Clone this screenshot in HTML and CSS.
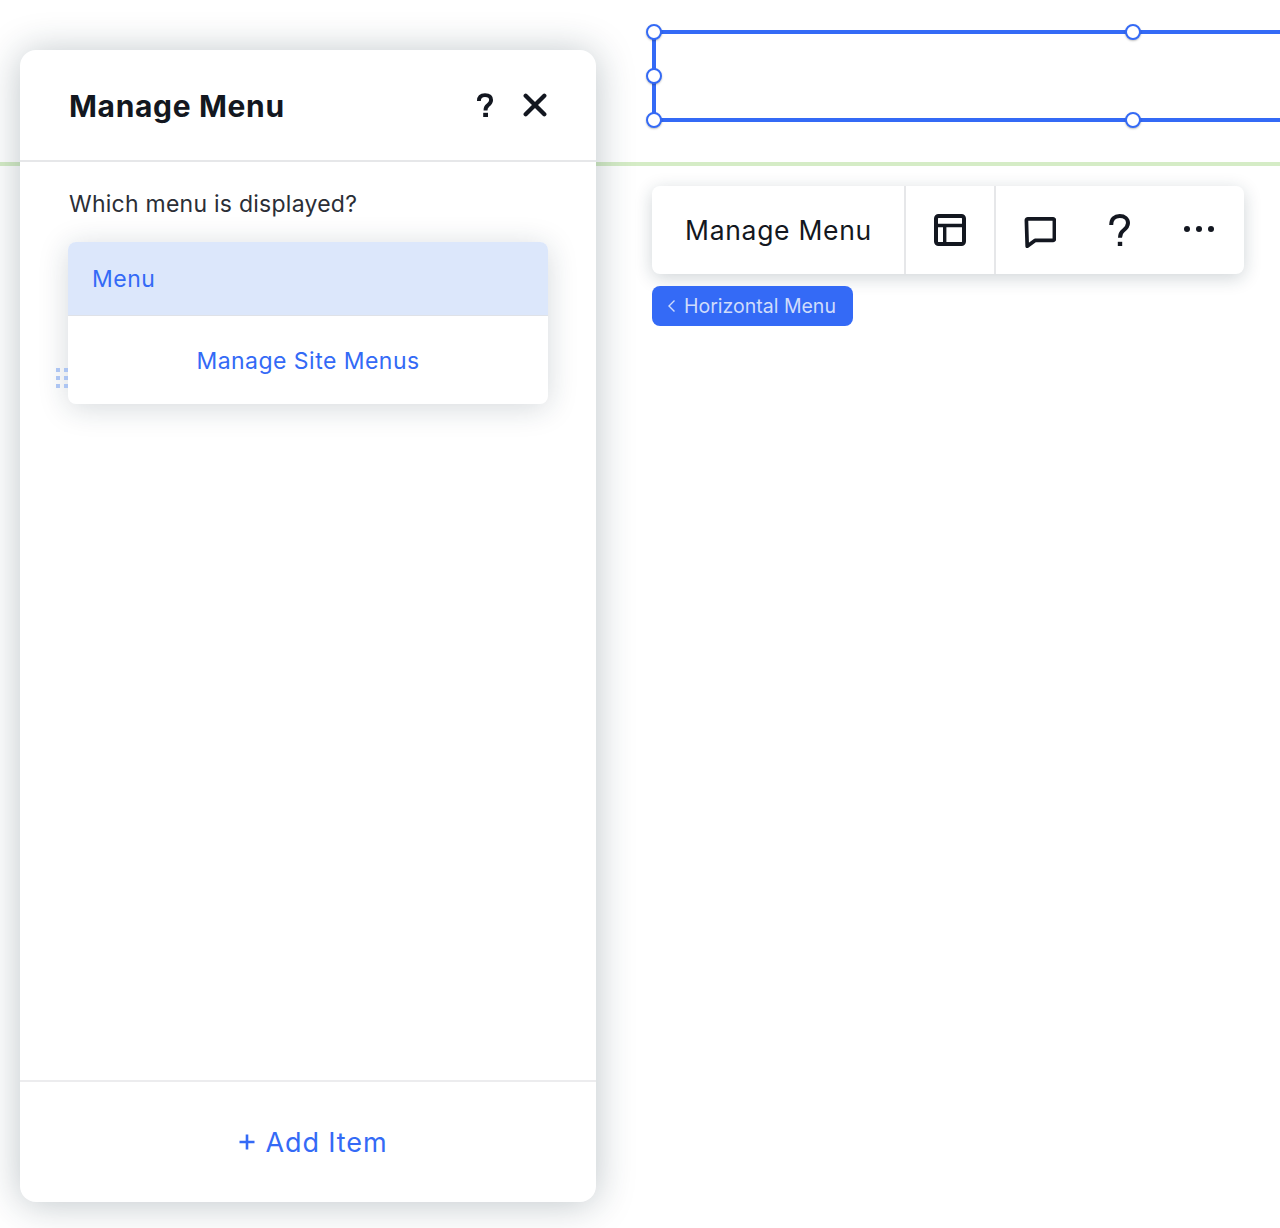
FILE: index.html
```html
<!DOCTYPE html>
<html lang="en">
<head>
<meta charset="utf-8">
<title>Manage Menu</title>
<link rel="stylesheet" href="styles.css">
</head>
<body>
<div class="guide"></div>
<div class="stage">
  <section class="panel">
    <header class="panel-head">
      <h1 class="panel-title">Manage Menu</h1>
      <div class="panel-actions">
        <svg class="icon-help" width="18" height="26" viewBox="0 0 18 26"><path d="M2.900 9C2.900 4.700 5.400 3.100 9 3.100s6.100 1.600 6.100 5c0 2.800-1.500 3.900-3.300 5.300-1.700 1.300-2.300 2.300-2.300 5.100" fill="none" stroke="#131720" stroke-width="3.900"/><rect x="7.200" y="20.800" width="4.800" height="4.200" fill="#131720"/></svg>
        <svg class="icon-close" width="24" height="24" viewBox="0 0 24 24"><path d="M2.700 2.700l18.600 18.600M21.300 2.700L2.700 21.300" fill="none" stroke="#131720" stroke-width="4.300" stroke-linecap="round"/></svg>
      </div>
    </header>
    <div class="panel-body">
      <p class="panel-label">Which menu is displayed?</p>
      <div class="dropdown-wrap">
        <svg class="grip" width="12" height="20" viewBox="0 0 12 20"><g fill="#adc5f2"><rect width="4" height="4"/><rect x="8" width="4" height="4"/><rect y="8" width="4" height="4"/><rect x="8" y="8" width="4" height="4"/><rect y="16" width="4" height="4"/><rect x="8" y="16" width="4" height="4"/></g></svg>
        <div class="dropdown">
          <div class="dropdown-item">Menu</div>
          <div class="dropdown-link">Manage Site Menus</div>
        </div>
      </div>
    </div>
    <footer class="panel-foot">
      <span class="add-plus"><svg width="16" height="16" viewBox="0 0 16 16"><path d="M8 .5v15M.5 8h15" fill="none" stroke="#346af6" stroke-width="2.600"/></svg></span>
      <span class="add-text">Add Item</span>
    </footer>
  </section>
  <div class="editor">
    <div class="selection">
      <span class="handle h-tl"></span>
      <span class="handle h-tm"></span>
      <span class="handle h-ml"></span>
      <span class="handle h-bl"></span>
      <span class="handle h-bm"></span>
    </div>
    <div class="toolbar">
      <div class="tool-main">Manage Menu</div>
      <div class="tool-layout">
        <svg class="tool-icon" width="32" height="32" viewBox="0 0 32 32"><rect x="2" y="2" width="28" height="28" rx="2.500" fill="none" stroke="#131720" stroke-width="4"/><path d="M2 11.500h28M10.700 11.500V30" fill="none" stroke="#131720" stroke-width="3.400"/></svg>
      </div>
      <div class="tool-group">
        <svg class="tool-chat" width="32" height="32" viewBox="0 0 32 32"><path d="M4 2.800H29a1.400 1.400 0 0 1 1.400 1.400V23a1.400 1.400 0 0 1-1.400 1.400H11L3.200 30.300 2.400 4.200a1.500 1.500 0 0 1 1.600-1.400z" fill="none" stroke="#131720" stroke-width="3.700" stroke-linejoin="round"/></svg>
        <svg class="tool-help" width="24" height="34" viewBox="0 0 24 34"><path d="M3.200 12C3.200 5.800 6.800 3 11.700 3s8.300 2.800 8.300 7.100c0 3.900-2.300 5.500-4.700 7.400-2.200 1.700-3.300 3.200-3.300 7.300" fill="none" stroke="#131720" stroke-width="4"/><rect x="9.800" y="28.800" width="4.400" height="4.200" fill="#131720"/></svg>
        <svg class="tool-more" width="32" height="8" viewBox="0 0 32 8"><circle cx="3" cy="4" r="3" fill="#131720"/><circle cx="15" cy="4" r="3" fill="#131720"/><circle cx="27" cy="4" r="3" fill="#131720"/></svg>
      </div>
    </div>
    <div class="crumb">
      <svg width="9" height="14" viewBox="0 0 9 14"><path d="M7.500 1.500L2 7l5.500 5.500" fill="none" stroke="#cfdcfb" stroke-width="1.400"/></svg>
      <span>Horizontal Menu</span>
    </div>
  </div>
</div>
</body>
</html>
```

FILE: styles.css
```css
* { box-sizing: border-box; }
html, body { margin: 0; padding: 0; background: #fff; }
body {
  position: relative;
  height: 1228px;
  overflow: hidden;
  font-family: Inter, "Noto Sans", "Liberation Sans", sans-serif;
  color: #131720;
}
.guide {
  position: absolute;
  top: 162px;
  left: 0;
  right: 0;
  height: 4px;
  background: #d5ecc6;
}
.stage {
  position: relative;
  display: flex;
  align-items: flex-start;
  padding: 50px 0 0 20px;
}
.panel {
  width: 576px;
  height: 1152px;
  flex: none;
  display: flex;
  flex-direction: column;
  background: #fff;
  border-radius: 16px;
  box-shadow: 0 2px 38px rgba(22, 45, 61, .28);
}
.panel-head {
  height: 112px;
  flex: none;
  display: flex;
  align-items: center;
  justify-content: space-between;
  padding: 0 49px;
  border-bottom: 2px solid #e6e7e9;
}
.panel-title {
  margin: 2px 0 0;
  font-size: 30px;
  font-weight: 700;
  letter-spacing: .65px;
}
.panel-actions { display: flex; align-items: center; gap: 29px; }
.icon-close { display: block; }
.icon-help { display: block; }
.panel-body { flex: 1; padding: 0 48px; }
.panel-label {
  margin: 0;
  padding: 28px 0 0 1px;
  font-size: 23px;
  line-height: 28px;
  letter-spacing: .25px;
  color: #2b2e36;
}
.dropdown-wrap { position: relative; margin-top: 24px; }
.grip { position: absolute; left: -12px; top: 126px; z-index: 1; }
.dropdown {
  position: relative;
  background: #fff;
  border-radius: 8px;
  box-shadow: 0 4px 30px rgba(22, 45, 61, .18);
  overflow: hidden;
}
.dropdown-item {
  height: 74px;
  display: flex;
  align-items: center;
  padding-left: 24px;
  background: #dce7fb;
  border-bottom: 1px solid #dfe2e8;
  font-size: 23px;
  letter-spacing: .5px;
  color: #346af6;
}
.dropdown-link {
  height: 88px;
  padding-top: 2px;
  display: flex;
  align-items: center;
  justify-content: center;
  font-size: 23px;
  letter-spacing: .47px;
  color: #346af6;
}
.panel-foot {
  height: 122px;
  flex: none;
  display: flex;
  align-items: center;
  justify-content: center;
  gap: 10px;
  padding-left: 11px;
  border-top: 2px solid #ececee;
  color: #346af6;
  font-size: 27px;
  letter-spacing: .9px;
}
.add-plus { display: flex; }
.editor {
  position: relative;
  flex: none;
  margin-left: 56px;
  padding-top: 136px;
  width: 628px;
}
.selection {
  position: absolute;
  top: -20px;
  left: 0;
  width: 628px;
  height: 92px;
  border: solid #346af6;
  border-width: 4px 0 4px 4px;
}
.handle {
  position: absolute;
  width: 16px;
  height: 16px;
  border-radius: 50%;
  background: #fff;
  border: 2px solid #346af6;
  box-shadow: 0 1px 2px rgba(0, 0, 0, .25);
}
.h-tl { left: -10px; top: -10px; }
.h-tm { left: 469px; top: -10px; }
.h-ml { left: -10px; top: 34px; }
.h-bl { left: -10px; bottom: -10px; }
.h-bm { left: 469px; bottom: -10px; }
.toolbar {
  width: 592px;
  height: 88px;
  display: flex;
  background: #fff;
  border-radius: 8px;
  box-shadow: 0 4px 18px rgba(22, 45, 61, .2);
}
.tool-main {
  width: 254px;
  display: flex;
  align-items: center;
  padding-left: 33px;
  font-size: 26.500px;
  letter-spacing: .7px;
  border-right: 2px solid #e6e7e9;
}
.tool-layout {
  width: 90px;
  display: flex;
  align-items: center;
  justify-content: center;
  border-right: 2px solid #e6e7e9;
}
.tool-group {
  flex: 1;
  display: flex;
  align-items: center;
  padding-left: 28px;
}
.tool-chat { margin-top: 4px; }
.tool-help { margin-left: 52px; }
.tool-more { margin-left: 52px; margin-top: -2px; }
.crumb {
  margin-top: 12px;
  width: 201px;
  height: 40px;
  display: flex;
  align-items: center;
  gap: 8px;
  padding-left: 15px;
  background: #346af6;
  border-radius: 8px;
  color: #cfdcfb;
  font-size: 19.500px;
  white-space: nowrap;
}
```
